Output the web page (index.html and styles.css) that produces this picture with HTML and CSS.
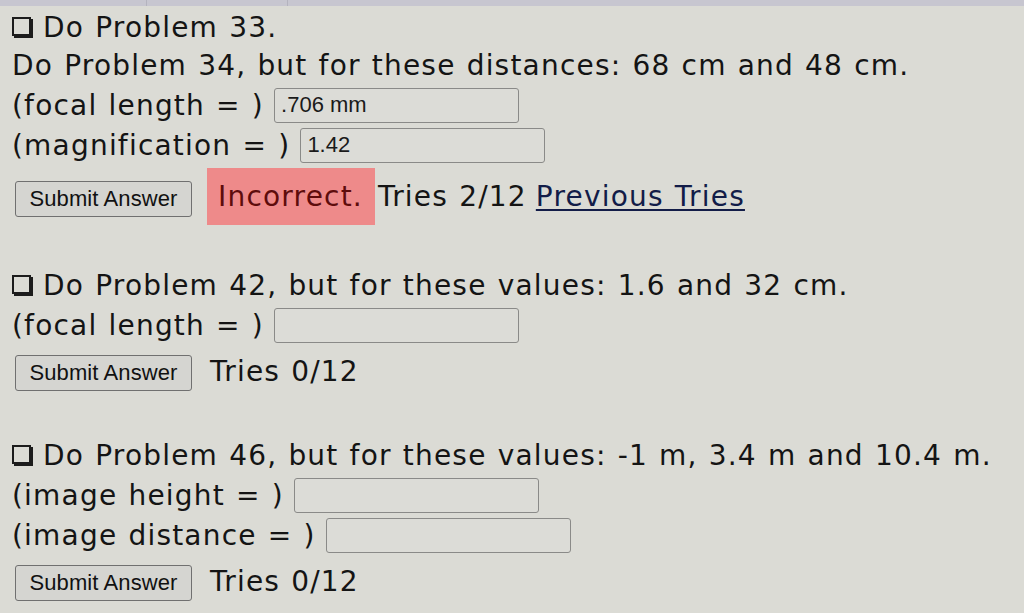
FILE: index.html
```html
<!doctype html>
<html>

<head>
	<meta charset="utf-8">
	<title>Lenses homework</title>
	<link rel="stylesheet" href="styles.css">
</head>

<body>
	<div class="topbar"><span class="tab"></span><span class="tab"></span></div>
	<div class="sheet">
		<section class="problem">
			<div class="line"><span class="check"></span>Do Problem 33.</div>
			<div class="line">Do Problem 34, but for these distances: 68 cm and 48 cm.</div>
			<div class="field">(focal length = ) <input class="answer" type="text" value=".706 mm"></div>
			<div class="field">(magnification = ) <input class="answer" type="text" value="1.42"></div>
			<div class="submit-row submit-row-graded">
				<button class="submit" type="button">Submit Answer</button>
				<span class="wrong">Incorrect.</span>
				<span class="tries">Tries 2/12</span>
				<a class="prev" href="#">Previous Tries</a>
			</div>
		</section>

		<section class="problem">
			<div class="line"><span class="check"></span>Do Problem 42, but for these values: 1.6 and 32 cm.</div>
			<div class="field">(focal length = ) <input class="answer" type="text" value=""></div>
			<div class="submit-row">
				<button class="submit" type="button">Submit Answer</button>
				<span class="tries">Tries 0/12</span>
			</div>
		</section>

		<section class="problem">
			<div class="line"><span class="check"></span>Do Problem 46, but for these values: -1 m, 3.4 m and 10.4 m.</div>
			<div class="field">(image height = ) <input class="answer" type="text" value=""></div>
			<div class="field">(image distance = ) <input class="answer" type="text" value=""></div>
			<div class="submit-row">
				<button class="submit" type="button">Submit Answer</button>
				<span class="tries">Tries 0/12</span>
			</div>
		</section>
	</div>
</body>

</html>
```

FILE: styles.css
```css
html,
body {
	margin: 0;
	background-color: #dbdbd5;
}

body {
	font-family: "DejaVu Sans", Verdana, sans-serif;
	font-size: 28px;
	letter-spacing: 1.2px;
	word-spacing: 1px;
	color: #141414;
	overflow: hidden;
}

.topbar {
	height: 6px;
	background-color: #c7c6d0;
	display: flex;
	gap: 140px;
	padding-left: 146px;
}

.tab {
	width: 1px;
	height: 6px;
	background-color: #b4b3be;
}

.sheet {
	padding: 3px 0 0 12px;
}

.problem {
	margin-bottom: 40px;
}

.problem:last-child {
	margin-bottom: 0;
}

.line {
	line-height: 38px;
	white-space: nowrap;
}

.check {
	display: inline-block;
	width: 15px;
	height: 15px;
	border: 2px solid #1c1c1c;
	box-shadow: 2px 2px 0 #1c1c1c;
	margin-right: 12px;
	vertical-align: 1px;
}

.field {
	display: flex;
	align-items: center;
	height: 40px;
	white-space: pre;
}

.answer {
	box-sizing: border-box;
	width: 245px;
	height: 35px;
	margin: 0 0 0 -1px;
	padding: 0 6px;
	font-family: "Liberation Sans", Arial, sans-serif;
	font-size: 22px;
	letter-spacing: 0;
	word-spacing: 0;
	color: #1a1a1a;
	background-color: #dcdcd7;
	border: 1px solid #8a8a88;
	border-radius: 3px;
}

.submit-row {
	display: flex;
	align-items: center;
	height: 44px;
	padding-top: 4px;
}

.submit-row-graded {
	height: 62px;
	padding-top: 0;
}

.submit {
	box-sizing: border-box;
	height: 36px;
	width: 177px;
	margin: 0 15px 0 3px;
	padding: 0;
	font-family: "Liberation Sans", Arial, sans-serif;
	font-size: 22px;
	letter-spacing: 0.1px;
	word-spacing: 0;
	color: #111;
	background-color: #d5d5d1;
	border: 1px solid #707070;
	border-radius: 3px;
}

.submit-row-graded .submit {
	margin-top: 6px;
}

.problem:not(:first-child) .submit-row .submit {
	margin-top: 4px;
}

.problem:nth-child(2) {
	margin-bottom: 44px;
}

.wrong {
	display: inline-flex;
	align-items: center;
	height: 57px;
	padding: 0 12px 0 11px;
	background-color: #ee8a8a;
	color: #5e0c0c;
}

.tries {
	margin-left: 3px;
}

.prev {
	margin-left: 9px;
	color: #121c48;
	text-decoration: underline;
	text-underline-offset: 3px;
	text-decoration-thickness: 2px;
}
```
